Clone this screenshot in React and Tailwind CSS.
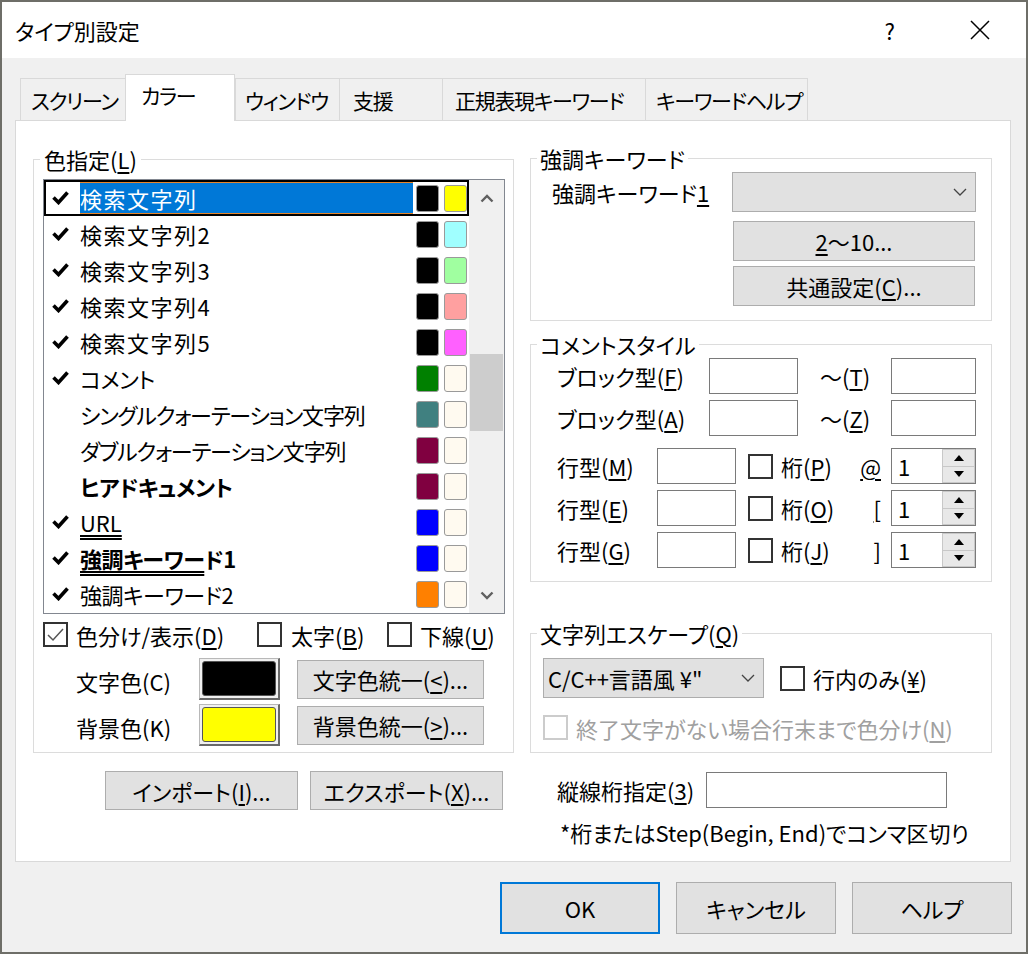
import React from "react";

const rows = [
  { label: "検索文字列", check: true, fg: "bg-black", bg: "bg-[#ffff00]", sel: true, t: "tracking-[1.5px]" },
  { label: "検索文字列2", check: true, fg: "bg-black", bg: "bg-[#a0ffff]", t: "tracking-[1.5px]" },
  { label: "検索文字列3", check: true, fg: "bg-black", bg: "bg-[#a0ffa0]", t: "tracking-[1.5px]" },
  { label: "検索文字列4", check: true, fg: "bg-black", bg: "bg-[#ffa0a0]", t: "tracking-[1.5px]" },
  { label: "検索文字列5", check: true, fg: "bg-black", bg: "bg-[#ff60ff]", t: "tracking-[1.5px]" },
  { label: "コメント", check: true, fg: "bg-[#008000]", bg: "bg-[#fffaf0]", t: "tracking-[-0.5px]" },
  { label: "シングルクォーテーション文字列", check: false, fg: "bg-[#408080]", bg: "bg-[#fffaf0]", t: "tracking-[-1.2px]" },
  { label: "ダブルクォーテーション文字列", check: false, fg: "bg-[#800040]", bg: "bg-[#fffaf0]", t: "tracking-[-1.2px]" },
  { label: <span className="font-bold">ヒアドキュメント</span>, check: false, fg: "bg-[#800040]", bg: "bg-[#fffaf0]", t: "tracking-[-0.5px]" },
  { label: <span className="underline decoration-double underline-offset-[3px]">URL</span>, check: true, fg: "bg-[#0000ff]", bg: "bg-[#fffaf0]", t: "" },
  {
    label: (
      <span className="font-bold">
        <span className="underline decoration-double underline-offset-[3px]">強調キーワー</span>ド1
      </span>
    ),
    check: true,
    fg: "bg-[#0000ff]",
    bg: "bg-[#fffaf0]",
    t: "tracking-[-0.5px]",
  },
  { label: "強調キーワード2", check: true, fg: "bg-[#ff8000]", bg: "bg-[#fffaf0]", t: "tracking-[-0.5px]" },
];

const tabs = [
  { label: "スクリーン", w: "w-[105px] pl-[10px]" },
  { label: "カラー", w: "w-[110px] pl-[15px]", active: true },
  { label: "ウィンドウ", w: "w-[104px] pl-[9px]" },
  { label: "支援", w: "w-[103px] pl-[13px]" },
  { label: "正規表現キーワード", w: "w-[203px] pl-[12px]" },
  { label: "キーワードヘルプ", w: "w-[163px] pl-[10px] border-r" },
];

function U({ children }) {
  return <span className="underline underline-offset-[3px]">{children}</span>;
}

function Tick() {
  return (
    <svg width="17" height="14" viewBox="0 0 17 14">
      <path d="M1.5 6.5 L6.5 11.5 L15.5 1.5" fill="none" stroke="#000" strokeWidth="3.6" />
    </svg>
  );
}

function Chevron() {
  return (
    <svg width="14" height="8" viewBox="0 0 14 8">
      <path d="M1 1 L7 7 L13 1" fill="none" stroke="#444" strokeWidth="1.3" />
    </svg>
  );
}

function Box({ checked, disabled }) {
  return (
    <div
      className={`w-[25px] h-[25px] shrink-0 border-2 bg-white flex items-center justify-center ${
        disabled ? "border-[#cccccc]" : "border-[#333333]"
      }`}
    >
      {checked && (
        <svg width="17" height="14" viewBox="0 0 17 14">
          <path d="M1 7 L6 12 L16 1" fill="none" stroke="#555" strokeWidth="1.5" />
        </svg>
      )}
    </div>
  );
}

function Btn({ className, children }) {
  return (
    <div className={`bg-[#e1e1e1] border border-[#adadad] flex items-center justify-center whitespace-nowrap ${className}`}>
      {children}
    </div>
  );
}

function Input({ className }) {
  return <div className={`h-[36px] bg-white border border-[#7a7a7a] shrink-0 ${className}`} />;
}

function Spin() {
  return (
    <div className="w-[85px] h-[36px] bg-white border border-[#7a7a7a] flex">
      <span className="pl-[6px] flex-1 self-center">1</span>
      <div className="w-[33px] flex flex-col">
        <div className="flex-1 bg-[#e8e8e8] border border-[#c8c8c8] flex items-center justify-center">
          <svg width="10" height="6" viewBox="0 0 10 6">
            <path d="M0 6 L5 0 L10 6 Z" fill="#000" />
          </svg>
        </div>
        <div className="flex-1 bg-[#e8e8e8] border border-t-0 border-[#c8c8c8] flex items-center justify-center">
          <svg width="10" height="6" viewBox="0 0 10 6">
            <path d="M0 0 L5 6 L10 0 Z" fill="#000" />
          </svg>
        </div>
      </div>
    </div>
  );
}

function ColorBtn({ color }) {
  return (
    <div className="w-[81px] h-[42px] shrink-0 bg-[#f0f0f0] border border-[#b8b8b8] border-r-2 border-b-2 border-r-[#696969] border-b-[#696969] p-[2px]">
      <div className={`w-full h-full rounded-[3px] border border-[#555] ${color}`} />
    </div>
  );
}

function LineRow({ label, keyChar, mt }) {
  return (
    <div className={`flex items-center ml-[26px] ${mt}`}>
      <span className="w-[100px]">
        行型(<U>{label}</U>)
      </span>
      <Input className="w-[79px]" />
      <div className="w-[111px] ml-[12px] flex items-center">
        <Box />
        <span className="ml-[8px]">
          桁(<U>{keyChar.k}</U>)
        </span>
      </div>
      <span className="w-[32px] flex justify-end pr-[10px]">
        <U>{keyChar.s}</U>
      </span>
      <Spin />
    </div>
  );
}

export default function App() {
  return (
    <div className="w-[1028px] h-[954px] border-2 border-[#6e6e68] bg-[#f0f0f0] flex flex-col text-black text-[22px] leading-[24px] font-['Noto_Sans_CJK_JP','Noto_Sans',sans-serif] [font-feature-settings:'palt']">
      {/* title bar */}
      <div className="h-[56px] bg-white flex items-center pl-[13px] shrink-0">
        <span>タイプ別設定</span>
        <span className="ml-auto">?</span>
        <svg className="ml-[75px] mr-[36px]" width="20" height="20" viewBox="0 0 20 20">
          <path d="M1 1 L19 19 M19 1 L1 19" stroke="#000" strokeWidth="1.5" />
        </svg>
      </div>

      <div className="ml-[13px] mt-[16px]">
        {/* tabs */}
        <div className="flex items-end pl-[5px] h-[47px] -mb-px relative z-10 whitespace-nowrap text-[21px] tracking-[-1.3px]">
          {tabs.map((t) =>
            t.active ? (
              <div key={t.label} className={`h-[47px] bg-white border border-b-0 border-[#d9d9d9] flex items-center pb-[6px] ${t.w}`}>
                {t.label}
              </div>
            ) : (
              <div key={t.label} className={`h-[42px] mb-px bg-[#f0f0f0] border-l border-t border-[#d9d9d9] flex items-center ${t.w}`}>
                {t.label}
              </div>
            )
          )}
        </div>

        {/* panel */}
        <div className="w-[996px] h-[742px] bg-white border border-[#d9d9d9] flex">
          {/* left column */}
          <div className="ml-[17px] w-[481px] pt-[26px] shrink-0">
            <fieldset className="h-[606px] border border-[#dcdcdc]">
              <legend className="ml-[6px] px-[4px]">
                色指定(<U>L</U>)
              </legend>
              <div className="ml-[9px] mt-[8px] w-[462px] h-[435px] border border-[#828790] flex">
                <div className="w-[425px]">
                  {rows.map((r, i) => (
                    <div key={i} className={`h-[36px] flex items-center ${r.sel ? "shadow-[inset_0_0_0_2px_#000]" : ""}`}>
                      <div className="w-[36px] pl-[8px] flex">{r.check && <Tick />}</div>
                      <div
                        className={`w-[333px] h-[32px] flex items-center whitespace-nowrap ${r.t} ${
                          r.sel ? "bg-[#0078d7] text-white border-y border-[#e8862a]" : ""
                        }`}
                      >
                        {r.label}
                      </div>
                      <div className={`ml-[3px] w-[23px] h-[27px] rounded-[3px] border border-[#9a9a9a] ${r.fg}`} />
                      <div className={`ml-[5px] w-[23px] h-[27px] rounded-[3px] border border-[#9a9a9a] ${r.bg}`} />
                    </div>
                  ))}
                </div>
                <div className="w-[35px] bg-[#f0f0f0] flex flex-col">
                  <div className="h-[36px] flex items-center justify-center">
                    <svg width="14" height="9" viewBox="0 0 14 9">
                      <path d="M1.5 7.5 L7 2 L12.5 7.5" fill="none" stroke="#606060" strokeWidth="2.4" />
                    </svg>
                  </div>
                  <div className="h-[138px]" />
                  <div className="h-[77px] mx-px bg-[#cdcdcd]" />
                  <div className="flex-1" />
                  <div className="h-[36px] flex items-center justify-center">
                    <svg width="14" height="9" viewBox="0 0 14 9">
                      <path d="M1.5 1.5 L7 7 L12.5 1.5" fill="none" stroke="#606060" strokeWidth="2.4" />
                    </svg>
                  </div>
                </div>
              </div>

              <div className="ml-[9px] mt-[8px] h-[25px] flex items-center">
                <div className="w-[214px] flex items-center">
                  <Box checked />
                  <span className="ml-[8px]">
                    色分け/表示(<U>D</U>)
                  </span>
                </div>
                <div className="w-[130px] flex items-center">
                  <Box />
                  <span className="ml-[9px]">
                    太字(<U>B</U>)
                  </span>
                </div>
                <div className="flex items-center">
                  <Box />
                  <span className="ml-[8px]">
                    下線(<U>U</U>)
                  </span>
                </div>
              </div>

              <div className="mt-[11px] ml-[42px] flex items-center">
                <span className="w-[123px] pt-[4px]">文字色(C)</span>
                <ColorBtn color="bg-black" />
                <Btn className="ml-[17px] w-[187px] h-[39px]">
                  文字色統一(<U>&lt;</U>)...
                </Btn>
              </div>
              <div className="mt-[4px] ml-[42px] flex items-center">
                <span className="w-[123px] pt-[4px]">背景色(K)</span>
                <ColorBtn color="bg-[#ffff00]" />
                <Btn className="ml-[17px] w-[187px] h-[39px]">
                  背景色統一(<U>&gt;</U>)...
                </Btn>
              </div>
            </fieldset>

            <div className="mt-[18px] ml-[72px] flex">
              <Btn className="w-[193px] h-[39px]">
                インポート(<U>I</U>)...
              </Btn>
              <Btn className="ml-[12px] w-[193px] h-[39px]">
                エクスポート(<U>X</U>)...
              </Btn>
            </div>
          </div>

          {/* right column */}
          <div className="ml-[16px] w-[462px] pt-[25px] shrink-0">
            <fieldset className="h-[175px] border border-[#dcdcdc]">
              <legend className="ml-[6px] px-[3px]">強調キーワード</legend>
              <div className="mt-[2px] flex items-center">
                <span className="ml-[21px] w-[180px]">
                  強調キーワード<U>1</U>
                </span>
                <div className="w-[244px] h-[40px] bg-[#e1e1e1] border border-[#adadad] flex items-center justify-end pr-[8px]">
                  <Chevron />
                </div>
              </div>
              <Btn className="mt-[9px] ml-[202px] w-[242px] h-[40px]">
                <U>2</U>〜10...
              </Btn>
              <Btn className="mt-[5px] ml-[202px] w-[242px] h-[40px]">
                共通設定(<U>C</U>)...
              </Btn>
            </fieldset>

            <fieldset className="mt-[11px] h-[250px] border border-[#dcdcdc]">
              <legend className="ml-[6px] px-[3px]">コメントスタイル</legend>
              <div className="mt-[2px] ml-[26px] flex items-center">
                <span className="w-[152px]">
                  ブロック型(<U>F</U>)
                </span>
                <Input className="w-[89px]" />
                <span className="ml-[22px] w-[71px]">
                  〜(<U>T</U>)
                </span>
                <Input className="w-[85px]" />
              </div>
              <div className="mt-[6px] ml-[26px] flex items-center">
                <span className="w-[152px]">
                  ブロック型(<U>A</U>)
                </span>
                <Input className="w-[89px]" />
                <span className="ml-[22px] w-[71px]">
                  〜(<U>Z</U>)
                </span>
                <Input className="w-[85px]" />
              </div>
              <LineRow label="M" keyChar={{ k: "P", s: "@" }} mt="mt-[12px]" />
              <LineRow label="E" keyChar={{ k: "O", s: "[" }} mt="mt-[6px]" />
              <LineRow label="G" keyChar={{ k: "J", s: "]" }} mt="mt-[6px]" />
            </fieldset>

            <fieldset className="mt-[39px] h-[132px] border border-[#dcdcdc]">
              <legend className="ml-[6px] px-[3px]">
                文字列エスケープ(<U>Q</U>)
              </legend>
              <div className="mt-[13px] ml-[12px] flex items-center">
                <div className="w-[221px] h-[40px] bg-[#e1e1e1] border border-[#adadad] flex items-center pl-[4px] pr-[8px]">
                  <span>C/C++言語風 ¥"</span>
                  <span className="ml-auto">
                    <Chevron />
                  </span>
                </div>
                <div className="ml-[16px] flex items-center">
                  <Box />
                  <span className="ml-[8px]">
                    行内のみ(<U>¥</U>)
                  </span>
                </div>
              </div>
              <div className="mt-[17px] ml-[12px] flex items-center text-[#a0a0a0]">
                <Box disabled />
                <span className="ml-[8px] whitespace-nowrap">
                  終了文字がない場合行末まで色分け(<U>N</U>)
                </span>
              </div>
            </fieldset>

            <div className="mt-[19px] ml-[27px] flex items-center">
              <span className="w-[149px]">
                縦線桁指定(<U>3</U>)
              </span>
              <Input className="w-[241px]" />
            </div>
            <div className="mt-[12px] ml-[30px] whitespace-nowrap">*桁またはStep(Begin, End)でコンマ区切り</div>
          </div>
        </div>
      </div>

      {/* dialog buttons */}
      <div className="mt-[20px] pr-[14px] flex justify-end gap-[16px]">
        <div className="w-[160px] h-[52px] bg-[#e1e1e1] border-2 border-[#0078d7] flex items-center justify-center">OK</div>
        <Btn className="w-[160px] h-[52px]">キャンセル</Btn>
        <Btn className="w-[160px] h-[52px]">ヘルプ</Btn>
      </div>
    </div>
  );
}
